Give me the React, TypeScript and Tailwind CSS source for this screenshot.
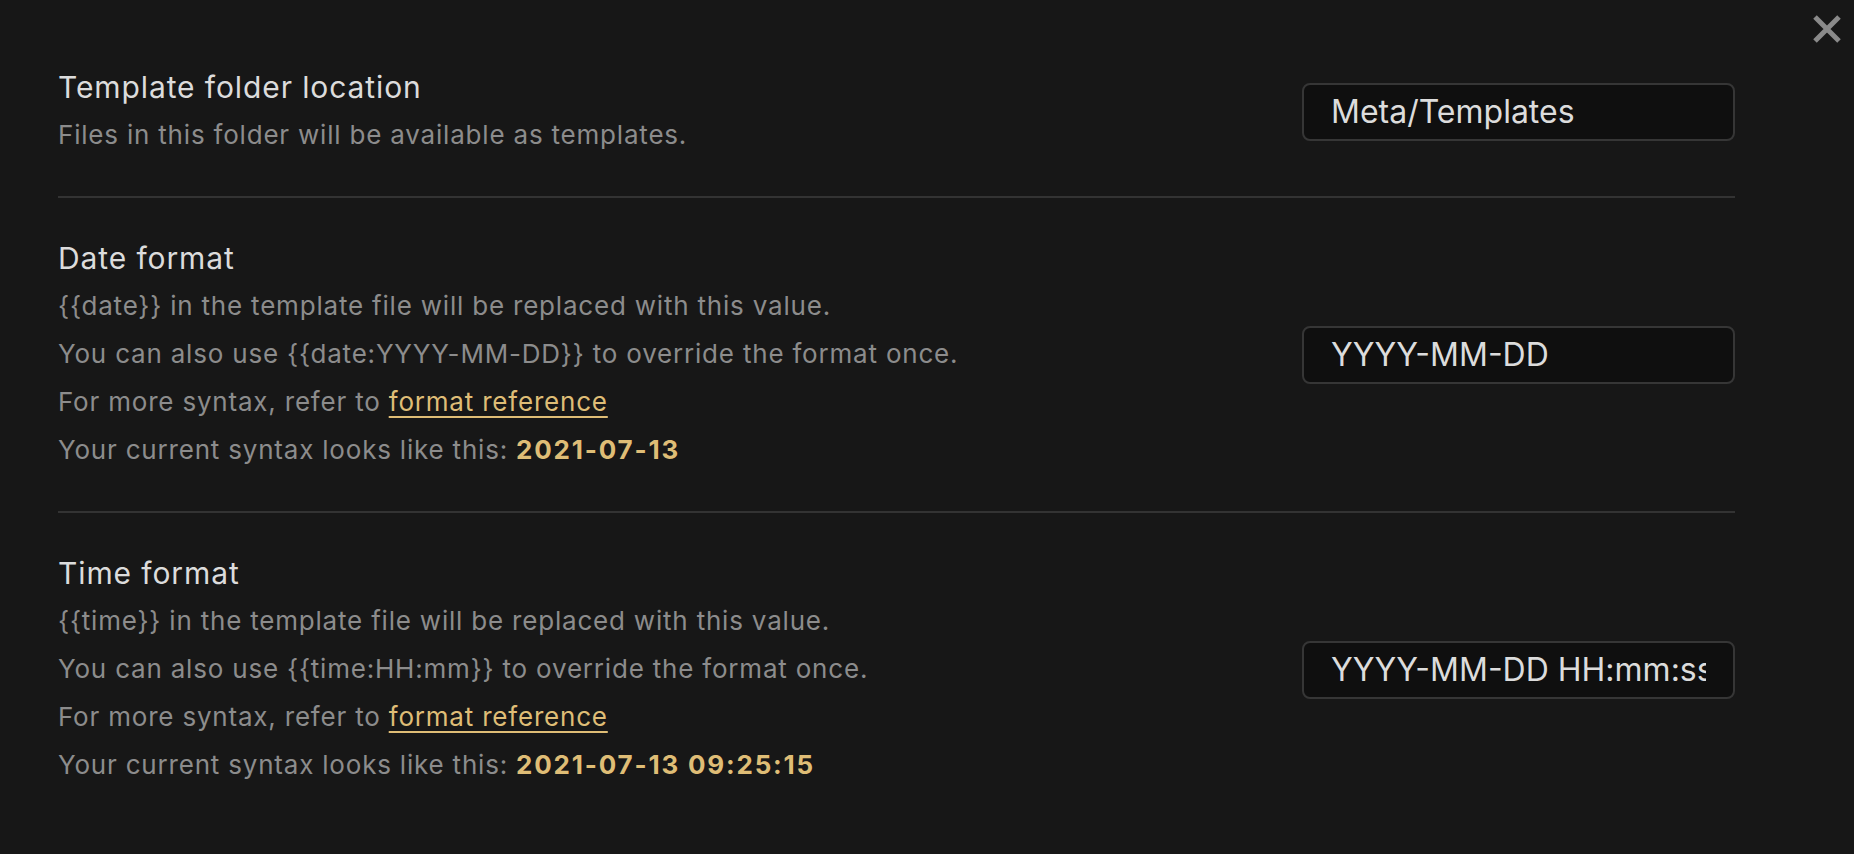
import React from 'react';

interface SettingRow {
  title: string;
  lines: React.ReactNode[];
  value: string;
}

const gold = 'text-[#dfbd76]';

function FormatLink() {
  return (
    <span className={`${gold} underline decoration-2 underline-offset-[5px] cursor-pointer`}>
      format reference
    </span>
  );
}

function Current({ children }: { children: React.ReactNode }) {
  return <b className={`${gold} font-bold tracking-[1.8px]`}>{children}</b>;
}

const rows: SettingRow[] = [
  {
    title: 'Template folder location',
    lines: ['Files in this folder will be available as templates.'],
    value: 'Meta/Templates',
  },
  {
    title: 'Date format',
    lines: [
      '{{date}} in the template file will be replaced with this value.',
      'You can also use {{date:YYYY-MM-DD}} to override the format once.',
      <>For more syntax, refer to <FormatLink /></>,
      <>Your current syntax looks like this: <Current>2021-07-13</Current></>,
    ],
    value: 'YYYY-MM-DD',
  },
  {
    title: 'Time format',
    lines: [
      '{{time}} in the template file will be replaced with this value.',
      'You can also use {{time:HH:mm}} to override the format once.',
      <>For more syntax, refer to <FormatLink /></>,
      <>Your current syntax looks like this: <Current>2021-07-13 09:25:15</Current></>,
    ],
    value: 'YYYY-MM-DD HH:mm:ss',
  },
];

export default function App() {
  return (
    <div className="relative min-h-screen bg-[#171717] font-['Inter',sans-serif]">
      {/* Close button */}
      <button className="absolute top-[15px] right-[13px] w-[28px] h-[28px] text-[#8a8a8a]">
        <svg viewBox="0 0 28 28" width="28" height="28" fill="none" stroke="currentColor" strokeWidth="5">
          <path d="M2 2 L26 26 M26 2 L2 26" />
        </svg>
      </button>

      <div className="pl-[58px] pr-[119px] pt-[27px]">
        {rows.map((row, i) => (
          <div
            key={row.title}
            className={`flex items-center justify-between py-[37px] ${
              i < rows.length - 1 ? 'border-b-2 border-[#333333]' : ''
            }`}
          >
            {/* Setting info */}
            <div>
              <div className="text-[30px] leading-[47px] tracking-[0.9px] text-[#dcdcdc]">{row.title}</div>
              {row.lines.map((line, j) => (
                <div key={j} className="text-[26px] leading-[48px] tracking-[0.8px] text-[#8c8c8c]">
                  {line}
                </div>
              ))}
            </div>
            {/* Control */}
            <input
              readOnly
              value={row.value}
              className="w-[433px] h-[58px] shrink-0 rounded-[8px] border-2 border-[#363636] bg-[#0f0f0f] px-[27px] text-[32px] text-[#dcdcdc] outline-none"
            />
          </div>
        ))}
      </div>
    </div>
  );
}
